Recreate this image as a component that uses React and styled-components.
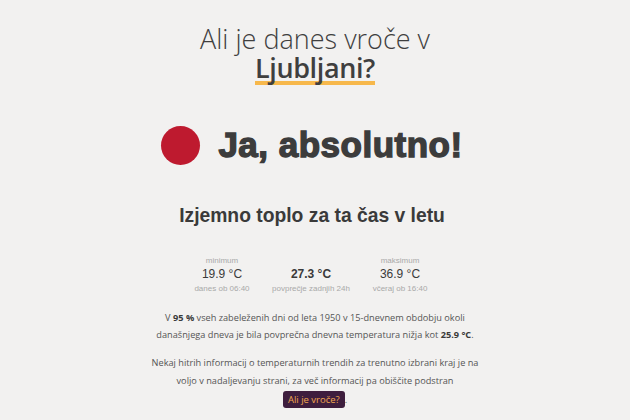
import React from "react";
import styled, { createGlobalStyle } from "styled-components";

const Global = createGlobalStyle`
  html, body { margin: 0; padding: 0; background: #f2f1f0; }
  body { font-family: "Open Sans", "Noto Sans", sans-serif; color: #3f3f3f; }
`;

const Page = styled.div`
  width: 630px;
  height: 420px;
  overflow: hidden;
  display: flex;
  flex-direction: column;
  align-items: center;
  padding-top: 23px;
  box-sizing: border-box;
`;

const Title = styled.h1`
  margin: 0;
  display: flex;
  flex-direction: column;
  align-items: center;
  font-family: "Open Sans", "Noto Sans", sans-serif;
  font-weight: 300;
  font-size: 27px;
  color: #3f3f3f;
`;

const TitleLine = styled.span`
  display: block;
  line-height: 32px;
`;

const City = styled.span`
  display: block;
  font-weight: 600;
  letter-spacing: -0.4px;
  border-bottom: 4px solid #f7b84b;
  line-height: 25px;
  padding-bottom: 1px;
`;

const Answer = styled.div`
  display: flex;
  align-items: center;
  gap: 18px;
  margin-top: 40px;
  margin-left: -6px;
`;

const Dot = styled.div`
  width: 39px;
  height: 39px;
  border-radius: 50%;
  background: ${(p) => p.$color};
`;

const AnswerText = styled.div`
  font-family: "Liberation Sans", Arial, sans-serif;
  font-weight: 900;
  font-size: 35px;
  line-height: 40px;
  color: #3c3c3c;
  -webkit-text-stroke: 1.4px #3c3c3c;
  letter-spacing: 0.5px;
`;

const Subtitle = styled.h2`
  margin: 40px 0 0;
  font-family: "Liberation Sans", Arial, sans-serif;
  font-weight: 700;
  font-size: 19.3px;
  color: #3a3a3a;
  margin-left: -6px;
`;

const Stats = styled.div`
  display: grid;
  grid-template-columns: 82px 96px 82px;
  margin-top: 28px;
  margin-left: -8px;
  font-family: "Liberation Sans", Arial, sans-serif;
  text-align: center;
`;

const Stat = styled.div`
  display: flex;
  flex-direction: column;
  align-items: center;
`;

const StatLabel = styled.div`
  font-size: 8px;
  color: #a9a9a9;
  height: 12px;
  line-height: 12px;
`;

const StatValue = styled.div`
  font-size: 12px;
  line-height: 15px;
  font-weight: ${(p) => (p.$bold ? 700 : 400)};
  color: #3a3a3a;
`;

const StatNote = styled.div`
  font-size: 8px;
  line-height: 13px;
  color: #a9a9a9;
`;

const Para = styled.p`
  margin: ${(p) => p.$mt}px 0 0;
  font-size: 9.2px;
  line-height: ${(p) => p.$lh}px;
  color: #555;
  text-align: center;
  white-space: nowrap;
  b { color: #3a3a3a; font-weight: 700; }
`;

const LinkButton = styled.a`
  display: inline-block;
  background: #3e1e3e;
  color: #f3a950;
  padding: 0 5px;
  border-radius: 3px;
  line-height: 17px;
  font-size: 9.5px;
  text-decoration: none;
  margin-top: 1px;
`;

const stats = [
  { label: "minimum", value: "19.9 °C", note: "danes ob 06:40" },
  { label: "", value: "27.3 °C", note: "povprečje zadnjih 24h", bold: true },
  { label: "maksimum", value: "36.9 °C", note: "včeraj ob 16:40" },
];

export default function App() {
  return (
    <>
      <Global />
      <Page>
        <Title>
          <TitleLine>Ali je danes vroče v</TitleLine>
          <City>Ljubljani?</City>
        </Title>
        <Answer>
          <Dot $color="#be1a2f" />
          <AnswerText>Ja, absolutno!</AnswerText>
        </Answer>
        <Subtitle>Izjemno toplo za ta čas v letu</Subtitle>
        <Stats>
          {stats.map((s, i) => (
            <Stat key={i}>
              <StatLabel>{s.label}</StatLabel>
              <StatValue $bold={s.bold}>{s.value}</StatValue>
              <StatNote>{s.note}</StatNote>
            </Stat>
          ))}
        </Stats>
        <Para $mt={14} $lh={17}>
          V <b>95 %</b> vseh zabeleženih dni od leta 1950 v 15-dnevnem obdobju okoli
          <br />
          današnjega dneva je bila povprečna dnevna temperatura nižja kot <b>25.9 °C</b>.
        </Para>
        <Para $mt={11} $lh={18}>
          Nekaj hitrih informacij o temperaturnih trendih za trenutno izbrani kraj je na
          <br />
          voljo v nadaljevanju strani, za več informacij pa obiščite podstran
          <br />
          <LinkButton href="#">Ali je vroče?</LinkButton>.
        </Para>
      </Page>
    </>
  );
}
